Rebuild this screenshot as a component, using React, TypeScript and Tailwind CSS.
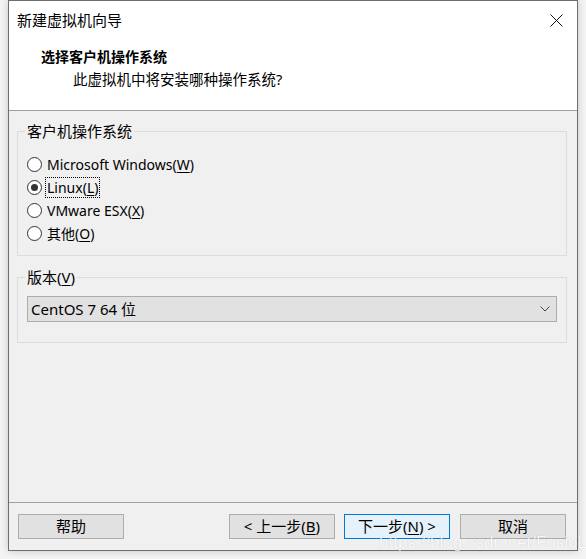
import React from 'react'

const font = { fontFamily: '"Noto Sans", "Noto Sans CJK SC", sans-serif' }

function Radio({ label, keyChar, checked, focus }: { label: string; keyChar: string; checked?: boolean; focus?: boolean }) {
  return (
    <div className="flex h-[23px] items-center">
      <span className="flex size-[15px] items-center justify-center rounded-full border border-[#333] bg-white">
        {checked && <span className="size-[7px] rounded-full bg-[#333]" />}
      </span>
      <span className={'ml-[4px] px-[1px] leading-[19px] ' + (focus ? 'outline outline-1 outline-dotted outline-black' : '')}>
        {label}(<span className="underline underline-offset-2">{keyChar}</span>)
      </span>
    </div>
  )
}

function Btn({ children, primary }: { children: React.ReactNode; primary?: boolean }) {
  return (
    <button
      className={
        'flex h-[25px] w-[106px] items-center justify-center border text-[15px] ' +
        (primary ? 'border-[#0078d7] bg-[#e5f1fb]' : 'border-[#adadad] bg-[#e1e1e1]')
      }
    >
      {children}
    </button>
  )
}

export default function App() {
  return (
    <div className="relative h-[559px] w-[586px] overflow-hidden bg-[#f4f4f4] pl-[8px] text-black" style={font}>
      <div className="flex h-[551px] w-[570px] flex-col border border-[#6e6e6e] bg-[#f0f0f0] shadow-[0_0_8px_rgba(0,0,0,0.18)]">
        {/* header */}
        <div className="h-[110px] shrink-0 border-b border-[#a0a0a0] bg-white">
          <div className="flex h-[38px] items-center justify-between pl-[8px] pr-[14px]">
            <span className="text-[15px]">新建虚拟机向导</span>
            <svg width="13" height="13" viewBox="0 0 13 13">
              <path d="M0.5 0.5 L12.5 12.5 M12.5 0.5 L0.5 12.5" stroke="#111" strokeWidth="1" />
            </svg>
          </div>
          <div className="mt-[7px] pl-[32px] text-[14px] font-bold leading-[22px]">选择客户机操作系统</div>
          <div className="pl-[64px] text-[14.5px] leading-[22px]">此虚拟机中将安装哪种操作系统?</div>
        </div>

        {/* content */}
        <div className="flex grow flex-col pl-[8px] pr-[10px] text-[15px]">
          <fieldset className="mt-[11px] h-[134px] border border-[#dcdcdc]">
            <legend className="ml-[7px] px-[2px] leading-[18px]">客户机操作系统</legend>
            <div className="mt-[13px] flex flex-col pl-[9px] text-[14px]">
              <Radio label="Microsoft Windows" keyChar="W" />
              <Radio label="Linux" keyChar="L" checked focus />
              <Radio label="VMware ESX" keyChar="X" />
              <Radio label="其他" keyChar="O" />
            </div>
          </fieldset>

          <fieldset className="mt-[12px] h-[75px] border border-[#dcdcdc]">
            <legend className="ml-[7px] px-[2px] leading-[18px]">
              版本(<span className="underline underline-offset-2">V</span>)
            </legend>
            <div className="mx-[9px] mt-[10px] flex h-[26px] items-center justify-between border border-[#adadad] bg-[#e1e1e1] pl-[3px] pr-[6px]">
              <span>CentOS 7 64 位</span>
              <svg width="10" height="6" viewBox="0 0 10 6">
                <path d="M0.5 0.5 L5 5 L9.5 0.5" stroke="#444" strokeWidth="1" fill="none" />
              </svg>
            </div>
          </fieldset>
        </div>

        {/* footer */}
        <div className="flex h-[48px] shrink-0 items-center border-t border-[#a0a0a0] pl-[9px] pr-[11px]">
          <Btn>帮助</Btn>
          <div className="grow" />
          <Btn>
            &lt; 上一步(<span className="underline underline-offset-2">B</span>)
          </Btn>
          <div className="w-[9px]" />
          <Btn primary>
            下一步(<span className="underline underline-offset-2">N</span>) &gt;
          </Btn>
          <div className="w-[10px]" />
          <Btn>取消</Btn>
        </div>
      </div>

      {/* csdn watermark */}
      <div
        className="pointer-events-none absolute left-[379px] top-[530px] text-[17px] text-white opacity-70 [text-shadow:0_0_1px_rgba(0,0,0,0.3)]"
        style={{ fontFamily: '"Liberation Sans", sans-serif' }}
      >
        https://blog.csdn.net/FusioLi
      </div>
    </div>
  )
}
